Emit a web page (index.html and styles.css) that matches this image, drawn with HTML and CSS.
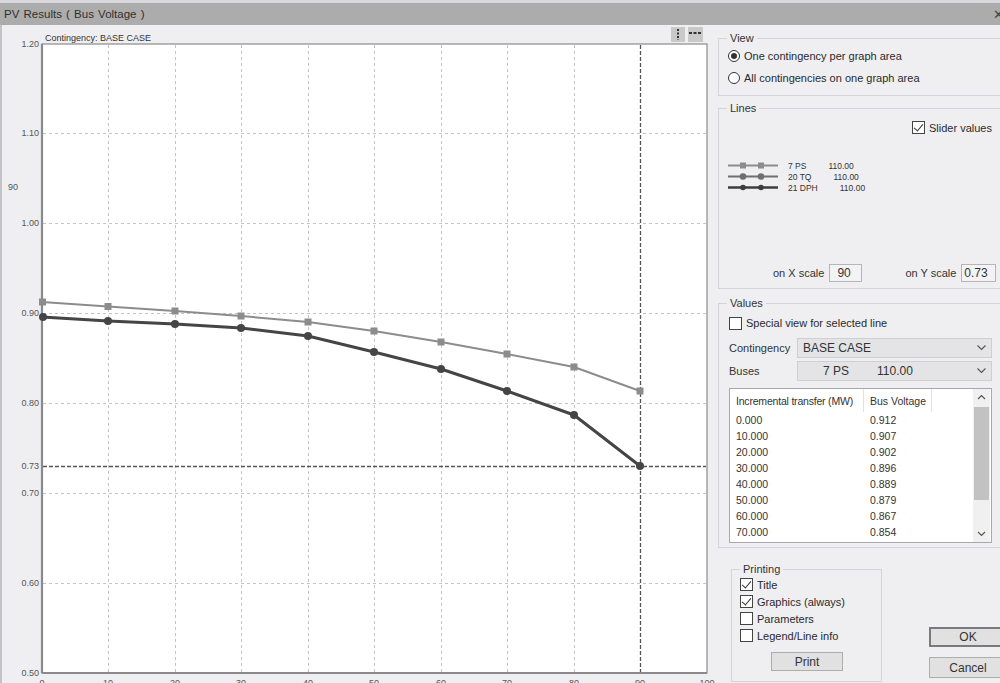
FILE: index.html
```html
<!DOCTYPE html>
<html>
<head>
<meta charset="utf-8">
<title>PV Results</title>
<link rel="stylesheet" href="styles.css">
</head>
<body>
<div class="window">
  <div class="titlebar">
    <span class="title">PV Results ( Bus Voltage )</span>
    <span class="close">✕</span>
  </div>
  <div class="main">
    <div class="chart">
      <svg class="plot" width="715" height="658" viewBox="0 25 715 658">
        <rect x="42" y="44" width="665" height="629" fill="#ffffff" stroke="#8a8a8a" stroke-width="1.2"/>
        <g stroke="#c4c4c4" stroke-width="1" stroke-dasharray="3 3">
          <line x1="108.5" y1="45" x2="108.5" y2="672"/>
          <line x1="175.5" y1="45" x2="175.5" y2="672"/>
          <line x1="241.5" y1="45" x2="241.5" y2="672"/>
          <line x1="308.5" y1="45" x2="308.5" y2="672"/>
          <line x1="374.5" y1="45" x2="374.5" y2="672"/>
          <line x1="441.5" y1="45" x2="441.5" y2="672"/>
          <line x1="507.5" y1="45" x2="507.5" y2="672"/>
          <line x1="574.5" y1="45" x2="574.5" y2="672"/>
          <line x1="43" y1="133.5" x2="706" y2="133.5"/>
          <line x1="43" y1="223.5" x2="706" y2="223.5"/>
          <line x1="43" y1="313.5" x2="706" y2="313.5"/>
          <line x1="43" y1="403.5" x2="706" y2="403.5"/>
          <line x1="43" y1="493.5" x2="706" y2="493.5"/>
          <line x1="43" y1="583.5" x2="706" y2="583.5"/>
        </g>
        <g stroke="#555555" stroke-width="1.3" stroke-dasharray="4 2">
          <line x1="640.5" y1="45" x2="640.5" y2="672"/>
          <line x1="43" y1="466.5" x2="706" y2="466.5"/>
        </g>
        <line x1="42" y1="44" x2="42" y2="673" stroke="#8a8a8a" stroke-width="2.2"/>
        <line x1="42" y1="673" x2="707" y2="673" stroke="#8a8a8a" stroke-width="2.2"/>

        <polyline fill="none" stroke="#8c8c8c" stroke-width="2" points="42,302 108,306.5 175,311 241,316 308,322 374,331 441,342 507,354 574,367 640,391"/>
        <g fill="#8c8c8c">
          <rect x="39" y="298.5" width="7" height="7"/>
          <rect x="104.5" y="303" width="7" height="7"/>
          <rect x="171.5" y="307.5" width="7" height="7"/>
          <rect x="237.5" y="312.5" width="7" height="7"/>
          <rect x="304.5" y="318.5" width="7" height="7"/>
          <rect x="370.5" y="327.5" width="7" height="7"/>
          <rect x="437.5" y="338.5" width="7" height="7"/>
          <rect x="503.5" y="350.5" width="7" height="7"/>
          <rect x="570.5" y="363.5" width="7" height="7"/>
          <rect x="636.5" y="387.5" width="7" height="7"/>
        </g>
        <polyline fill="none" stroke="#454545" stroke-width="3" stroke-linejoin="round" points="42,317 108,321 175,324 241,328 308,336 374,352 441,369 507,391 574,415 640,466"/>
        <g fill="#454545">
          <circle cx="43" cy="317" r="4"/>
          <circle cx="108" cy="321" r="4"/>
          <circle cx="175" cy="324" r="4"/>
          <circle cx="241" cy="328" r="4"/>
          <circle cx="308" cy="336" r="4"/>
          <circle cx="374" cy="352" r="4"/>
          <circle cx="441" cy="369" r="4"/>
          <circle cx="507" cy="391" r="4"/>
          <circle cx="574" cy="415" r="4"/>
          <circle cx="640" cy="466" r="4"/>
        </g>

        <g class="axis-text" text-anchor="end">
          <text x="39" y="47">1.20</text>
          <text x="39" y="136">1.10</text>
          <text x="39" y="226">1.00</text>
          <text x="39" y="316">0.90</text>
          <text x="39" y="406">0.80</text>
          <text x="39" y="469">0.73</text>
          <text x="39" y="496">0.70</text>
          <text x="39" y="586">0.60</text>
          <text x="39" y="676">0.50</text>
        </g>
        <text class="axis-text" x="8" y="190">90</text>
        <g class="axis-text" text-anchor="middle">
          <text x="42" y="686">0</text>
          <text x="108" y="686">10</text>
          <text x="175" y="686">20</text>
          <text x="241" y="686">30</text>
          <text x="308" y="686">40</text>
          <text x="374" y="686">50</text>
          <text x="441" y="686">60</text>
          <text x="507" y="686">70</text>
          <text x="574" y="686">80</text>
          <text x="640" y="686">90</text>
          <text x="707" y="686">100</text>
        </g>
        <text class="caption" x="45" y="41">Contingency:  BASE CASE</text>

        <rect x="671" y="27" width="14" height="15" fill="#c9c9c9"/>
        <line x1="678" y1="29" x2="678" y2="40" stroke="#333" stroke-width="2" stroke-dasharray="2 1.5"/>
        <rect x="688" y="27" width="15" height="15" fill="#c9c9c9"/>
        <line x1="689" y1="33" x2="702" y2="33" stroke="#333" stroke-width="2" stroke-dasharray="3 1.5"/>
      </svg>
    </div>

    <div class="side">
      <div class="group view">
        <div class="gtitle">View</div>
        <div class="opt-row"><span class="radio checked"></span><span>One contingency per graph area</span></div>
        <div class="opt-row"><span class="radio"></span><span>All contingencies on one graph area</span></div>
      </div>

      <div class="group lines">
        <div class="gtitle">Lines</div>
        <div class="opt-row slider"><span class="check checked"></span><span>Slider values</span></div>
        <div class="legend">
          <div class="leg-row">
            <svg width="50" height="11" viewBox="0 0 50 11"><line x1="0" y1="5.5" x2="50" y2="5.5" stroke="#8c8c8c" stroke-width="2"/><rect x="12" y="2.5" width="6" height="6" fill="#8c8c8c"/><rect x="30" y="2.5" width="6" height="6" fill="#8c8c8c"/></svg>
            <span class="leg-name">7 PS</span><span class="leg-val">110.00</span>
          </div>
          <div class="leg-row">
            <svg width="50" height="11" viewBox="0 0 50 11"><line x1="0" y1="5.5" x2="50" y2="5.5" stroke="#6e6e6e" stroke-width="2"/><circle cx="15" cy="5.5" r="3.3" fill="#6e6e6e"/><circle cx="33" cy="5.5" r="3.3" fill="#6e6e6e"/></svg>
            <span class="leg-name">20 TQ</span><span class="leg-val">110.00</span>
          </div>
          <div class="leg-row">
            <svg width="50" height="11" viewBox="0 0 50 11"><line x1="0" y1="5.5" x2="50" y2="5.5" stroke="#3c3c3c" stroke-width="2.4"/><circle cx="15" cy="5.5" r="2.8" fill="#3c3c3c"/><circle cx="33" cy="5.5" r="2.8" fill="#3c3c3c"/></svg>
            <span class="leg-name">21 DPH</span><span class="leg-val">110.00</span>
          </div>
        </div>
        <div class="scale-row">
          <span class="scale-lbl x">on X scale</span><span class="scale-box xb">90</span>
          <span class="scale-lbl y">on Y scale</span><span class="scale-box yb">0.73</span>
        </div>
      </div>

      <div class="group values">
        <div class="gtitle">Values</div>
        <div class="opt-row special"><span class="check"></span><span>Special view for selected line</span></div>
        <div class="field-row first">
          <span class="field-lbl">Contingency</span>
          <div class="select"><span class="sel-text">BASE CASE</span><svg class="chev" width="9" height="6" viewBox="0 0 9 6"><polyline points="0.5,0.5 4.5,4.5 8.5,0.5" fill="none" stroke="#555" stroke-width="1.1"/></svg></div>
        </div>
        <div class="field-row">
          <span class="field-lbl">Buses</span>
          <div class="select"><span class="sel-text bus">7 PS</span><span class="sel-text kv">110.00</span><svg class="chev" width="9" height="6" viewBox="0 0 9 6"><polyline points="0.5,0.5 4.5,4.5 8.5,0.5" fill="none" stroke="#555" stroke-width="1.1"/></svg></div>
        </div>
        <div class="listbox">
          <div class="list-main">
            <div class="lrow head"><span class="c1">Incremental transfer (MW)</span><span class="c2">Bus Voltage</span></div>
            <div class="lrow"><span class="c1">0.000</span><span class="c2">0.912</span></div>
            <div class="lrow"><span class="c1">10.000</span><span class="c2">0.907</span></div>
            <div class="lrow"><span class="c1">20.000</span><span class="c2">0.902</span></div>
            <div class="lrow"><span class="c1">30.000</span><span class="c2">0.896</span></div>
            <div class="lrow"><span class="c1">40.000</span><span class="c2">0.889</span></div>
            <div class="lrow"><span class="c1">50.000</span><span class="c2">0.879</span></div>
            <div class="lrow"><span class="c1">60.000</span><span class="c2">0.867</span></div>
            <div class="lrow"><span class="c1">70.000</span><span class="c2">0.854</span></div>
          </div>
          <div class="scrollbar">
            <svg class="arrow" width="17" height="16" viewBox="0 0 17 16"><polyline points="5,10 8.5,6.5 12,10" fill="none" stroke="#555" stroke-width="1.2"/></svg>
            <div class="thumb"></div>
            <div class="track"></div>
            <svg class="arrow" width="17" height="16" viewBox="0 0 17 16"><polyline points="5,6 8.5,9.5 12,6" fill="none" stroke="#555" stroke-width="1.2"/></svg>
          </div>
        </div>
      </div>

      <div class="bottom">
        <div class="group printing">
          <div class="gtitle">Printing</div>
          <div class="opt-row prow"><span class="check checked"></span><span>Title</span></div>
          <div class="opt-row prow"><span class="check checked"></span><span>Graphics (always)</span></div>
          <div class="opt-row prow"><span class="check"></span><span>Parameters</span></div>
          <div class="opt-row prow"><span class="check"></span><span>Legend/Line info</span></div>
          <div class="btn print">Print</div>
        </div>
        <div class="btn-col">
          <div class="btn ok">OK</div>
          <div class="btn cancel">Cancel</div>
        </div>
      </div>
    </div>
  </div>
</div>
</body>
</html>
```

FILE: styles.css
```css
* { box-sizing: border-box; }

html, body {
  margin: 0;
  padding: 0;
}

body {
  width: 1000px;
  height: 683px;
  overflow: hidden;
  background: #efeff2;
  font-family: "Liberation Sans", Arial, sans-serif;
  font-size: 11px;
  color: #2a2a2a;
}

.window {
  width: 1000px;
  height: 683px;
  display: flex;
  flex-direction: column;
}

.titlebar {
  height: 25px;
  flex: none;
  background: #acacac;
  border-top: 3px solid #d9d9db;
  display: flex;
  align-items: center;
  justify-content: space-between;
  padding-left: 4px;
}

.title {
  font-size: 11.5px;
  color: #303030;
  word-spacing: 1px;
}

.close {
  font-size: 13px;
  color: #444;
  margin-right: -4px;
}

.main {
  flex: 1;
  display: flex;
  min-height: 0;
}

.chart {
  width: 715px;
  flex: none;
  border-left: 2px solid #c4c4c8;
}

.plot {
  display: block;
  margin-left: -2px;
}

.axis-text {
  font-family: "Liberation Sans", Arial, sans-serif;
  font-size: 9px;
  fill: #555;
}

.caption {
  font-family: "Liberation Sans", Arial, sans-serif;
  font-size: 9px;
  fill: #333;
}

.side {
  width: 285px;
  flex: none;
  overflow: hidden;
  display: flex;
  flex-direction: column;
  padding-left: 3px;
}

.group {
  border: 1px solid #d3d3d8;
  width: 290px;
  flex: none;
  display: flex;
  flex-direction: column;
}

.gtitle {
  align-self: flex-start;
  margin-top: -7px;
  margin-left: 8px;
  padding: 0 3px;
  line-height: 13px;
  height: 13px;
  background: #efeff2;
  color: #333;
}

.opt-row {
  display: flex;
  align-items: center;
  gap: 4px;
  white-space: nowrap;
}

.radio {
  width: 12px;
  height: 12px;
  border: 1px solid #333;
  border-radius: 50%;
  background: #fff;
  display: flex;
  align-items: center;
  justify-content: center;
  flex: none;
}

.radio.checked::after {
  content: "";
  width: 6px;
  height: 6px;
  border-radius: 50%;
  background: #333;
}

.check {
  width: 13px;
  height: 13px;
  border: 1px solid #444;
  background: #fff;
  flex: none;
  position: relative;
}

.check.checked::after {
  content: "";
  position: absolute;
  left: 3px;
  top: 0px;
  width: 4px;
  height: 8px;
  border-right: 1.5px solid #333;
  border-bottom: 1.5px solid #333;
  transform: rotate(40deg);
}

/* View */
.view {
  margin-top: 13px;
  height: 58px;
  padding-left: 9px;
}

.view .opt-row {
  height: 22px;
}

.view .gtitle {
  margin-left: -1px;
}

.view .opt-row:first-of-type {
  margin-top: 1px;
}

/* Lines */
.lines {
  margin-top: 12px;
  height: 181px;
  padding-bottom: 6px;
}

.lines .gtitle {
  margin-left: 8px;
}

.slider {
  margin-top: 6px;
  margin-left: 193px;
  height: 13px;
}

.legend {
  margin-top: 26px;
  margin-left: 9px;
  display: flex;
  flex-direction: column;
}

.leg-row {
  height: 11px;
  display: flex;
  align-items: center;
  font-size: 8.5px;
  color: #333;
}

.leg-row svg {
  flex: none;
}

.leg-name {
  margin-left: 10px;
}

.leg-val {
  margin-left: 22px;
}

.scale-row {
  margin-top: auto;
  height: 18px;
  display: flex;
  align-items: center;
  color: #333;
}

.scale-lbl.x {
  margin-left: 54px;
}

.scale-lbl.y {
  margin-left: 43px;
}

.scale-box {
  height: 18px;
  border: 1px solid #b5b5b8;
  background: #f3f3f5;
  margin-left: 5px;
  display: flex;
  align-items: center;
  font-size: 12px;
  color: #333;
}

.scale-box.xb { width: 33px; padding-left: 7px; }
.scale-box.yb { width: 35px; padding-left: 2px; }

/* Values */
.values {
  margin-top: 14px;
  height: 245px;
  padding-left: 10px;
}

.values .gtitle {
  margin-left: -2px;
}

.special {
  margin-top: 5px;
  height: 16px;
}

.field-row {
  display: flex;
  align-items: center;
  height: 20px;
  margin-top: 3px;
}

.field-row.first {
  margin-top: 7px;
}

.field-lbl {
  width: 68px;
  flex: none;
  color: #333;
}

.select {
  width: 195px;
  height: 20px;
  background: #e4e4e6;
  border: 1px solid #cfcfd2;
  display: flex;
  align-items: center;
  padding-left: 5px;
  font-size: 12px;
  color: #333;
}

.sel-text.bus {
  margin-left: 20px;
}

.sel-text.kv {
  margin-left: 28px;
}

.chev {
  margin-left: auto;
  margin-right: 5px;
}

.listbox {
  margin-top: 7px;
  width: 263px;
  height: 155px;
  border: 1px solid #a8a8ac;
  background: #fff;
  display: flex;
  font-size: 10.5px;
}

.list-main {
  flex: 1;
  display: flex;
  flex-direction: column;
}

.lrow {
  height: 16px;
  display: flex;
  align-items: center;
  color: #333;
  white-space: nowrap;
}

.lrow.head {
  height: 23px;
}

.lrow .c1 {
  width: 134px;
  padding-left: 6px;
  flex: none;
}

.lrow .c2 {
  width: 68px;
  padding-left: 6px;
  flex: none;
}

.lrow.head .c1 {
  letter-spacing: -0.2px;
}

.lrow.head .c1,
.lrow.head .c2 {
  height: 23px;
  display: flex;
  align-items: center;
  border-right: 1px solid #e2e2e4;
}

.scrollbar {
  width: 17px;
  flex: none;
  background: #f0f0f0;
  margin: 0 1px 0 0;
  display: flex;
  flex-direction: column;
}

.arrow {
  display: block;
  flex: none;
}

.thumb {
  height: 93px;
  margin: 2px 1px 0 1px;
  background: #c2c2c2;
  flex: none;
}

.track {
  flex: 1;
}

/* bottom */
.bottom {
  display: flex;
  margin-top: 21px;
}

.printing {
  width: 151px;
  height: 113px;
  margin-left: 13px;
  padding-left: 8px;
}

.printing .gtitle {
  margin-left: 0px;
}

.prow {
  height: 17px;
}

.prow:first-of-type {
  margin-top: 2px;
}

.btn {
  background: #e1e1e1;
  border: 1px solid #adadad;
  display: flex;
  align-items: center;
  justify-content: center;
  color: #333;
  font-size: 12px;
}

.print {
  width: 72px;
  height: 19px;
  margin-top: 8px;
  margin-left: 31px;
}

.btn-col {
  margin-left: 47px;
  display: flex;
  flex-direction: column;
}

.ok {
  width: 78px;
  height: 20px;
  margin-top: 58px;
  border: 2px solid #7a7a7a;
}

.cancel {
  width: 78px;
  height: 21px;
  margin-top: 10px;
}
```
